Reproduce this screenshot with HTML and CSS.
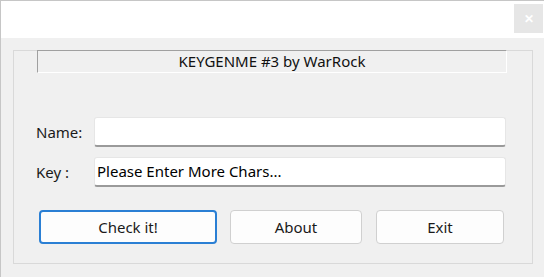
FILE: index.html
```html
<!DOCTYPE html>
<html lang="en">
<head>
    <meta charset="UTF-8">
    <title>KEYGENME #3 by WarRock</title>
    <link rel="stylesheet" href="styles.css">
</head>
<body>
<div class="window">
    <div class="titlebar">
        <span class="close">&#x2715;</span>
    </div>
    <div class="client">
        <div class="group">
            <div class="caption">KEYGENME #3 by WarRock</div>
            <div class="form">
                <label class="lbl">Name:</label>
                <div class="edit"></div>
                <label class="lbl">Key :</label>
                <div class="edit">Please Enter More Chars...</div>
            </div>
            <div class="buttons">
                <button class="btn btn-check default">Check it!</button>
                <button class="btn btn-about">About</button>
                <button class="btn btn-exit">Exit</button>
            </div>
        </div>
    </div>
</div>
</body>
</html>
```

FILE: styles.css
```css
body{margin:0;padding:0;background:#f0f0f0;font:15px "Noto Sans","Liberation Sans",sans-serif;color:#000;}
.window{width:544px;height:277px;background:#f0f0f0;border-top:1px solid #c6c6c6;border-left:1px solid #c6c6c6;box-sizing:border-box;overflow:hidden;}
.titlebar{height:37px;background:#fff;display:flex;justify-content:flex-end;align-items:flex-start;}
.close{width:29px;height:29px;margin:3px 1px 0 0;background:#e6e6e6;color:#fff;font-size:12px;font-weight:bold;display:flex;align-items:center;justify-content:center;}
.client{padding:12px 10px 0 12px;}
.group{width:520px;height:214px;border:1px solid #d9d9d9;box-sizing:border-box;}
.caption{width:470px;height:23px;margin:-1px 0 0 23px;box-sizing:border-box;border-top:1px solid #a0a0a0;border-left:1px solid #a0a0a0;border-right:1px solid #fff;border-bottom:1px solid #fff;text-align:center;line-height:21px;font-size:15px;color:#111;}
.form{display:grid;grid-template-columns:58px 412px;row-gap:10px;margin:44px 0 0 22px;align-items:center;}
.lbl{font-size:15px;color:#1a1a1a;}
.edit{height:30px;box-sizing:border-box;background:#fff;border:1px solid #e6e6e6;border-bottom:2px solid #9a9a9a;border-radius:3px;padding:0 2px;line-height:27px;font-size:15px;}
.buttons{display:flex;gap:13px;margin:23px 0 0 25px;}
.btn{height:34px;box-sizing:border-box;background:#fdfdfd;border:1px solid #d0d0d0;border-radius:4px;font:15px "Noto Sans","Liberation Sans",sans-serif;color:#1a1a1a;padding:0;}
.btn.default{border:2px solid #2a7fd4;}
.btn-check{width:178px;}
.btn-about{width:132px;}
.btn-exit{width:128px;margin-left:1px;}
```
